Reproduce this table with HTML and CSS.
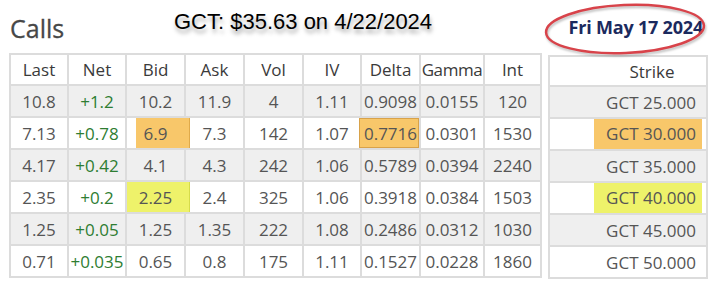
FILE: index.html
```html
<!DOCTYPE html>
<html lang="en">

<head>
    <meta charset="UTF-8">
    <meta name="viewport" content="width=device-width, initial-scale=1.0">
    <title>GCT Calls</title>
    <link rel="stylesheet" href="styles.css">
</head>

<body>
    <div class="topo">
        <h2 class="titulo">Calls</h2>
        <div class="preco">GCT: $35.63 on 4/22/2024</div>
        <div class="data">
            Fri May 17 2024
            <svg class="circulo" width="166" height="58" viewBox="0 0 166 58">
                <ellipse cx="82" cy="29" rx="79" ry="24" transform="rotate(-2.5 82 29)" />
            </svg>
        </div>
    </div>

    <div class="tabelas">
        <table class="calls">
            <colgroup>
                <col style="width:58px">
                <col style="width:58px">
                <col style="width:59px">
                <col style="width:59px">
                <col style="width:59px">
                <col style="width:58px">
                <col style="width:59px">
                <col style="width:64px">
                <col style="width:57px">
            </colgroup>
            <thead>
                <tr>
                    <th>Last</th><th>Net</th><th>Bid</th><th>Ask</th><th>Vol</th>
                    <th>IV</th><th>Delta</th><th class="apertado">Gamma</th><th>Int</th>
                </tr>
            </thead>
            <tbody>
                <tr>
                    <td>10.8</td><td class="net">+1.2</td><td>10.2</td><td>11.9</td><td>4</td>
                    <td>1.11</td><td>0.9098</td><td>0.0155</td><td>120</td>
                </tr>
                <tr>
                    <td>7.13</td><td class="net">+0.78</td>
                    <td class="marcado"><i class="marca laranja bid-laranja"></i><span>6.9</span></td>
                    <td>7.3</td><td>142</td><td>1.07</td>
                    <td class="marcado"><i class="marca laranja delta-laranja"></i><span>0.7716</span></td>
                    <td>0.0301</td><td>1530</td>
                </tr>
                <tr>
                    <td>4.17</td><td class="net">+0.42</td><td>4.1</td><td>4.3</td><td>242</td>
                    <td>1.06</td><td>0.5789</td><td>0.0394</td><td>2240</td>
                </tr>
                <tr>
                    <td>2.35</td><td class="net">+0.2</td>
                    <td class="marcado"><i class="marca amarelo bid-amarelo"></i><span>2.25</span></td>
                    <td>2.4</td><td>325</td><td>1.06</td><td>0.3918</td><td>0.0384</td><td>1503</td>
                </tr>
                <tr>
                    <td>1.25</td><td class="net">+0.05</td><td>1.25</td><td>1.35</td><td>222</td>
                    <td>1.08</td><td>0.2486</td><td>0.0312</td><td>1030</td>
                </tr>
                <tr>
                    <td>0.71</td><td class="net">+0.035</td><td>0.65</td><td>0.8</td><td>175</td>
                    <td>1.11</td><td>0.1527</td><td>0.0228</td><td>1860</td>
                </tr>
            </tbody>
        </table>

        <table class="strikes">
            <thead>
                <tr><th>Strike</th></tr>
            </thead>
            <tbody>
                <tr><td>GCT 25.000</td></tr>
                <tr><td><span class="realce laranja">GCT 30.000</span></td></tr>
                <tr><td>GCT 35.000</td></tr>
                <tr><td><span class="realce amarelo">GCT 40.000</span></td></tr>
                <tr><td>GCT 45.000</td></tr>
                <tr><td>GCT 50.000</td></tr>
            </tbody>
        </table>
    </div>
</body>

</html>
```

FILE: styles.css
```css
* {
    box-sizing: border-box;
}

body {
    margin: 0;
    background-color: #ffffff;
    font-family: "Open Sans", sans-serif;
    color: #555555;
    overflow: hidden;
}

.topo {
    display: flex;
    align-items: flex-start;
    height: 53px;
}

/* titulo um pouco mais pesado que o normal */
.titulo {
    margin: 11px 0 0 10px;
    font-size: 25px;
    font-weight: 500;
    color: #474747;
    width: 164px;
    -webkit-text-stroke: 0.3px #474747;
}

.preco {
    margin-top: 9px;
    font-family: "Liberation Sans", Arial, sans-serif;
    font-size: 22px;
    color: #000000;
    text-shadow: 1px 4px 4px rgba(0, 0, 0, 0.35);
}

.data {
    position: relative;
    margin: 15px 0 0 auto;
    padding-right: 5px;
    font-size: 18px;
    font-weight: bold;
    color: #1b2a5e;
    letter-spacing: -0.2px;
}

.circulo {
    position: absolute;
    left: -26px;
    top: -15px;
    fill: none;
    stroke: #d8434a;
    stroke-width: 2.5px;
    filter: drop-shadow(1px 2px 1px rgba(0, 0, 0, 0.25));
}

.tabelas {
    display: flex;
    align-items: flex-start;
    gap: 6px;
    padding-left: 9px;
}

table {
    border-collapse: separate;
    border-spacing: 0;
    table-layout: fixed;
    border-top: 2px solid #dcdcdc;
    border-left: 2px solid #dcdcdc;
}

th,
td {
    border-right: 2px solid #dcdcdc;
    border-bottom: 2px solid #dcdcdc;
    text-align: center;
    padding: 0;
    white-space: nowrap;
}

th {
    height: 31px;
    font-size: 17px;
    font-weight: normal;
    color: #3a3a3a;
}

td {
    height: 32px;
    font-size: 17px;
}

tbody tr:nth-child(odd) {
    background-color: #efefef;
}

.calls {
    width: 533px;
}

.apertado {
    letter-spacing: -0.4px;
}

.net {
    color: #2e7d32;
}

.marcado {
    position: relative;
}

.marcado span {
    position: relative;
}

.marca {
    position: absolute;
    top: 0;
    bottom: 0;
}

.laranja {
    background-color: #f8c76a;
}

.amarelo {
    background-color: #eef26a;
}

.bid-laranja {
    left: 9px;
    right: -6px;
    border-right: 1px solid #e0aa4a;
}

.bid-amarelo {
    left: 0;
    right: -6px;
    border-right: 1px solid #d6dc4a;
}

.delta-laranja {
    left: -3px;
    right: 0;
    border: 1px solid #d8a24a;
}

.strikes {
    width: 170px;
    margin-top: 2px;
}

.strikes th {
    padding-left: 48px;
    height: 30px;
}

.strikes td {
    text-align: right;
    padding-right: 10px;
}

.realce {
    display: inline-block;
    line-height: 30px;
    margin-right: -6px;
    padding: 0 6px 0 12px;
}
```
